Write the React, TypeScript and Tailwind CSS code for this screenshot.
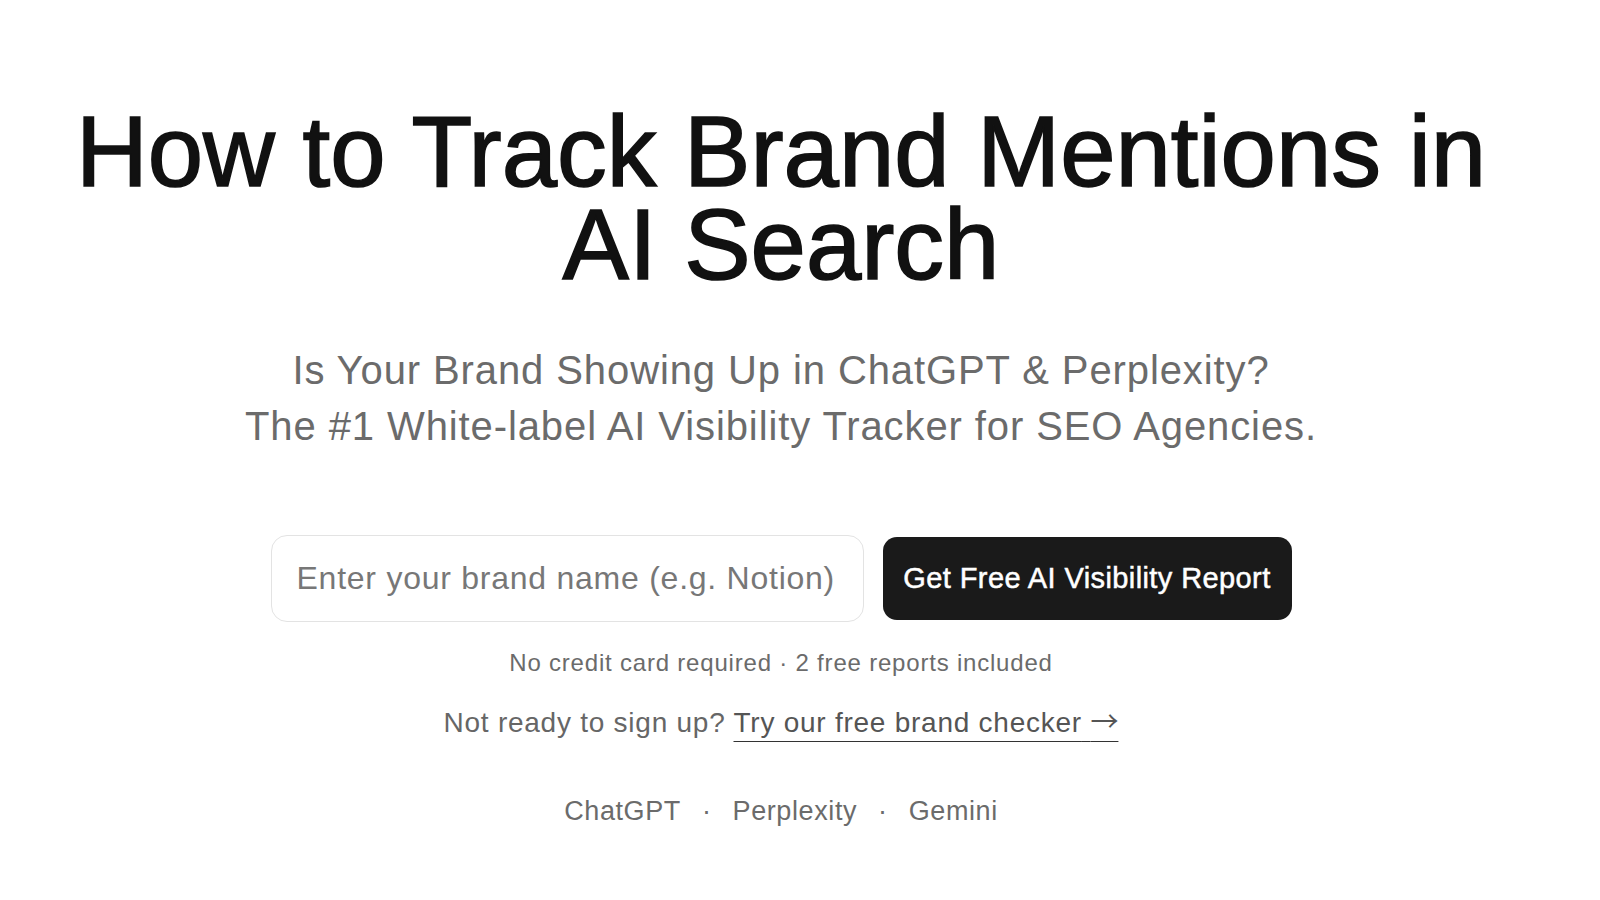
import React from "react";

export default function App() {
  return (
    <div className="min-h-screen w-full bg-white" style={{ fontFamily: '"Liberation Sans", Arial, sans-serif' }}>
      <main className="flex flex-col items-center pt-[105px] pr-[38px]">
        <h1 className="text-center text-[99.5px] leading-[93px] font-normal text-[#111111] [-webkit-text-stroke:1.6px_#111111]">
          How to Track Brand Mentions in
          <br />
          AI Search
        </h1>
        <p className="mt-[51px] text-center text-[40px] leading-[56px] tracking-[0.9px] text-[#6b6b6b]">
          Is Your Brand Showing Up in ChatGPT &amp; Perplexity?
          <br />
          The #1 White-label AI Visibility Tracker for SEO Agencies.
        </p>
        <div className="mt-[81px] flex items-center gap-[19px]">
          <input
            type="text"
            placeholder="Enter your brand name (e.g. Notion)"
            className="h-[87px] w-[593px] rounded-[16px] border border-[#e3e3e3] bg-white px-[25px] text-[32px] tracking-[0.75px] text-[#333] placeholder:text-[#777777] outline-none"
          />
          <button className="h-[83px] w-[409px] rounded-[14px] bg-[#1a1a1a] text-[29px] tracking-[0.4px] text-white [-webkit-text-stroke:0.5px_#ffffff]">
            Get Free AI Visibility Report
          </button>
        </div>
        <p className="mt-[25px] text-[24px] leading-[32px] tracking-[0.8px] text-[#6b6b6b]">
          No credit card required · 2 free reports included
        </p>
        <p className="mt-[23px] text-[28px] leading-[36px] tracking-[0.75px] text-[#666666]">
          Not ready to sign up?{" "}
          <a href="#" className="text-[#555555] underline decoration-[#333333] decoration-1 underline-offset-[9px]">
            Try our free brand checker{" "}
            <span style={{ fontFamily: '"Noto Sans CJK SC", sans-serif' }} className="tracking-normal">→</span>
          </a>
        </p>
        <div className="mt-[52px] flex items-center gap-[21px] text-[27px] leading-[36px] tracking-[0.6px] text-[#6b6b6b]">
          <span>ChatGPT</span>
          <span>·</span>
          <span>Perplexity</span>
          <span>·</span>
          <span>Gemini</span>
        </div>
      </main>
    </div>
  );
}
